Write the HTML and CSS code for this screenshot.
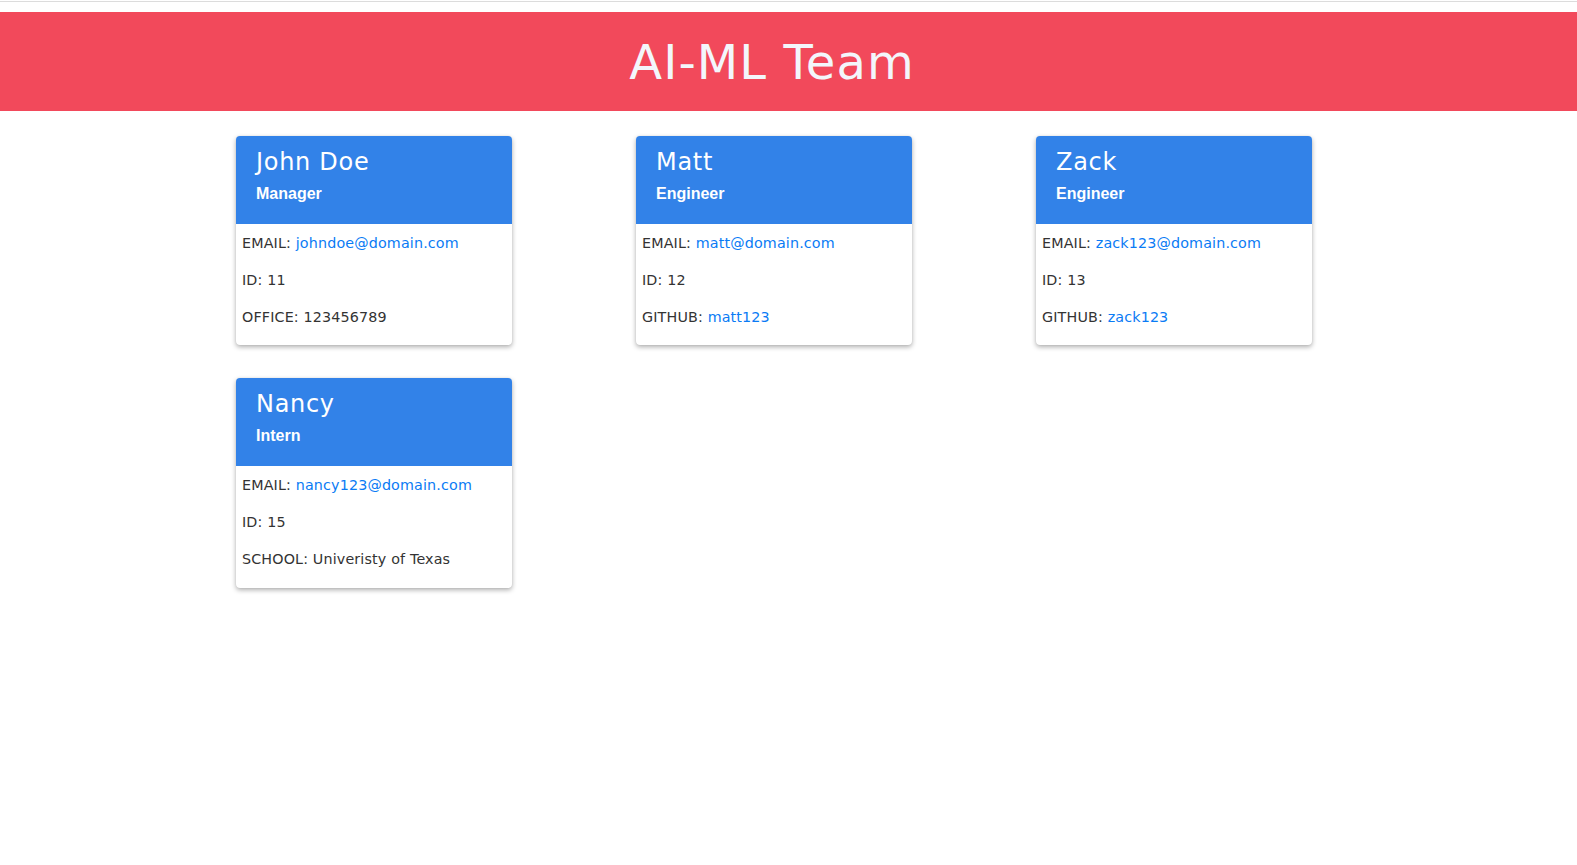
FILE: index.html
```html
<!DOCTYPE html>
<html lang="en">
<head>
<meta charset="utf-8">
<title>AI-ML Team</title>
<link rel="stylesheet" href="styles.css">
</head>
<body>
<div class="topline"></div>
<header class="banner">
  <h1 class="banner-title">AI-ML Team</h1>
</header>
<main class="wrap">
  <section class="team">
    <article class="card">
      <div class="card-head">
        <h2 class="card-name">John Doe</h2>
        <h3 class="card-role">Manager</h3>
      </div>
      <div class="card-body">
        <p>EMAIL: <a href="mailto:johndoe@domain.com">johndoe@domain.com</a></p>
        <p>ID: 11</p>
        <p>OFFICE: 123456789</p>
      </div>
    </article>
    <article class="card">
      <div class="card-head">
        <h2 class="card-name">Matt</h2>
        <h3 class="card-role">Engineer</h3>
      </div>
      <div class="card-body">
        <p>EMAIL: <a href="mailto:matt@domain.com">matt@domain.com</a></p>
        <p>ID: 12</p>
        <p>GITHUB: <a href="#">matt123</a></p>
      </div>
    </article>
    <article class="card">
      <div class="card-head">
        <h2 class="card-name">Zack</h2>
        <h3 class="card-role">Engineer</h3>
      </div>
      <div class="card-body">
        <p>EMAIL: <a href="mailto:zack123@domain.com">zack123@domain.com</a></p>
        <p>ID: 13</p>
        <p>GITHUB: <a href="#">zack123</a></p>
      </div>
    </article>
    <article class="card">
      <div class="card-head">
        <h2 class="card-name">Nancy</h2>
        <h3 class="card-role">Intern</h3>
      </div>
      <div class="card-body">
        <p>EMAIL: <a href="mailto:nancy123@domain.com">nancy123@domain.com</a></p>
        <p>ID: 15</p>
        <p>SCHOOL: Univeristy of Texas</p>
      </div>
    </article>
  </section>
</main>
</body>
</html>
```
FILE: styles.css
```css
html, body {
  margin: 0;
  padding: 0;
  background: #ffffff;
}

body {
  font-family: "DejaVu Sans", "Noto Sans", sans-serif;
  color: #333333;
  min-height: 865px;
}

.topline {
  height: 1px;
  margin-top: 1px;
  background: #dcdcdc;
}

.banner {
  margin-top: 10px;
  height: 99px;
  background: #f2495b;
  display: flex;
  align-items: center;
  justify-content: center;
  padding-right: 33px;
}

.banner-title {
  margin: 0;
  font-family: "DejaVu Sans", sans-serif;
  font-weight: 400;
  font-size: 48px;
  line-height: normal;
  letter-spacing: 1.1px;
  color: #f3f6fb;
}

.wrap {
  padding: 25px 29px 60px 0;
}

.team {
  width: 1200px;
  margin: 0 auto;
  display: grid;
  grid-template-columns: repeat(3, 400px);
  row-gap: 33px;
  justify-items: center;
  align-items: start;
}

.card {
  width: 276px;
  background: #ffffff;
  border-radius: 4px;
  box-shadow: 0 2px 5px rgba(0, 0, 0, 0.32), 0 0 1px rgba(0, 0, 0, 0.12);
  overflow: hidden;
}

.card-head {
  background: #3282e8;
  color: #ffffff;
  padding: 12px 20px 21px;
}

.card-name {
  margin: 0;
  font-family: "DejaVu Sans", sans-serif;
  font-weight: 400;
  font-size: 24px;
  line-height: 28.8px;
  letter-spacing: 0.7px;
}

.card-role {
  margin: 7px 0 0;
  font-family: "Liberation Sans", Arial, sans-serif;
  font-weight: 700;
  font-size: 16px;
  line-height: 19.2px;
}

.card-body {
  padding: 8.6px 6px 1.2px;
}

.card-body p {
  margin: 0 0 15.6px;
  font-size: 14.3px;
  line-height: 21.6px;
  letter-spacing: 0.15px;
  color: #333333;
}

.card-body a {
  color: #0a7bf5;
  text-decoration: none;
}
```
